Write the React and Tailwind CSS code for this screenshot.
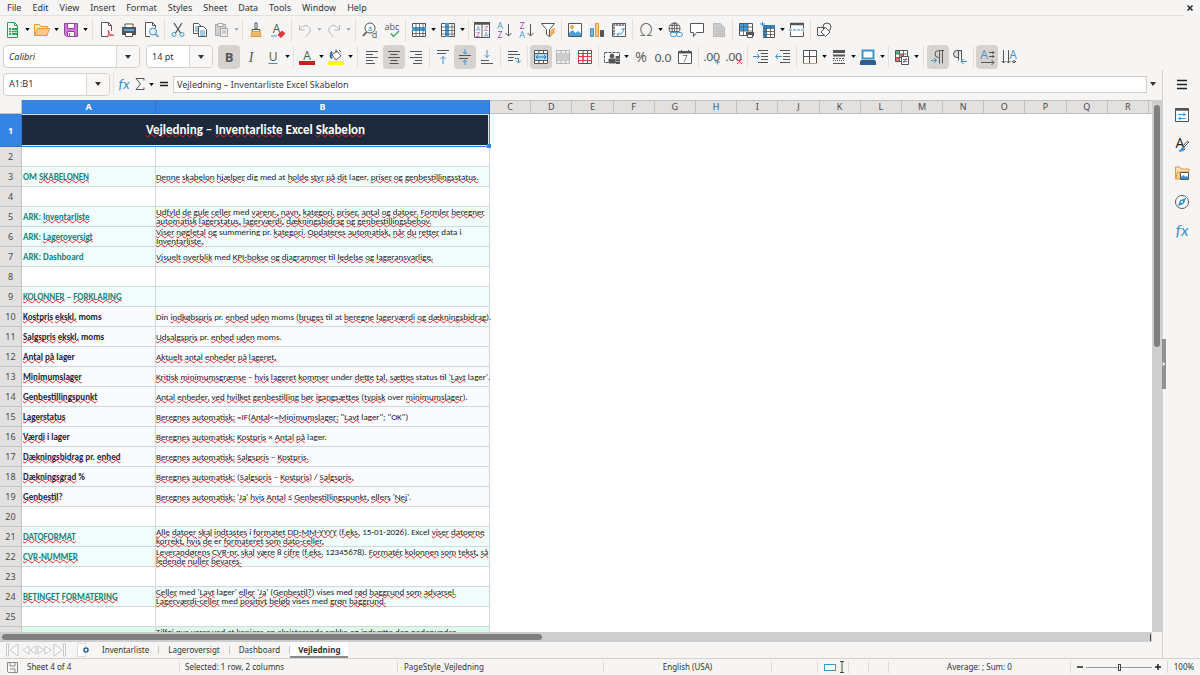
import React, { useState } from "react";

const UI = "font-['Noto_Sans',sans-serif]";
const CELL = "font-['Carlito','Lato',sans-serif]";

const G = "#555555";
const B = "#3d95cf";
const R = "#e0383e";
const O = "#e8963a";

const Svg = ({ children, className = "size-4" }) => (
  <svg
    viewBox="0 0 16 16"
    className={`overflow-visible ${className}`}
    fill="none"
    stroke={G}
    strokeWidth="1"
    aria-hidden="true"
  >
    {children}
  </svg>
);

const T = ({ x, y, size = 8, fill = G, children, ...rest }) => (
  <text
    x={x}
    y={y}
    fontSize={size}
    fill={fill}
    stroke="none"
    textAnchor="middle"
    fontFamily="Open Sans, sans-serif"
    {...rest}
  >
    {children}
  </text>
);

// Drawings for the two toolbars, keyed by command
const icons = {
  newDoc: (
    <>
      <path d="M2.5.5h7l3 3v12h-10z" fill="#fff" stroke="#2f9b57" />
      <path d="M9.5.5v3h3" stroke="#2f9b57" />
      <path d="M4 6h8v7H4z" fill="#3aa564" stroke="none" />
      <path d="M4 8.500h8M4 10.500h8M6.500 6v7" stroke="#fff" strokeWidth=".7" />
    </>
  ),
  open: (
    <>
      <path d="M.5 13.500V2.500h5l1.500 2h6.500v3" fill="#fce2b8" stroke={O} />
      <path d="M.5 13.500l3-7h12l-2.500 7z" fill="#fbc98a" stroke={O} />
    </>
  ),
  save: (
    <>
      <path d="M1.500 1.500h13v13h-11l-2-2z" fill="#c77fd0" stroke="#9a3fa8" />
      <path d="M4.500 1.500h7v5h-7zM4.500 9.500h7v5h-7z" fill="#fff" stroke="#9a3fa8" />
      <path d="M6.500 11v3.500" stroke="#9a3fa8" />
    </>
  ),
  pdf: (
    <>
      <path d="M9 14.500H2.500V.5h7l3 3V9" fill="#fff" />
      <path d="M9.500.5v3h3" />
      <path d="M8 15c1-2 2.500-4 1.800-6.500C9.500 8 8.800 9 10 11c1 1.500 3 2.500 4.500 2.500 1-.5-2-1.500-6.500 1.500z" stroke={R} />
    </>
  ),
  print: (
    <>
      <path d="M4 5V2h8v3" fill="#fff" />
      <path d="M1 5h14v8H1z" fill="#555" stroke="none" />
      <path d="M3 7h10v2H3z" fill="#55a7dc" stroke="none" />
      <path d="M4.500 10.500h7v4h-7z" fill="#fff" />
    </>
  ),
  preview: (
    <>
      <path d="M7 14.500H2.500V.5h7l3 3V6" fill="#fff" />
      <path d="M9.500.5v3h3" />
      <circle cx="10" cy="9.500" r="3.500" fill="#e3f1fa" stroke={B} />
      <path d="M12.500 12l3 3" stroke={B} strokeWidth="1.500" />
    </>
  ),
  cut: (
    <>
      <path d="M4 1l6.500 10M12 1L5.500 11" strokeWidth="1.300" />
      <circle cx="4" cy="12.500" r="2" stroke={B} />
      <circle cx="12" cy="12.500" r="2" stroke={B} />
    </>
  ),
  copy: (
    <>
      <path d="M1.500 1.500h5l3 3v7h-8z" fill="#fff" />
      <path d="M3 5h3M3 7h3M3 9h3" stroke={B} />
      <path d="M6.500 4.500h5l3 3v7h-8z" fill="#fff" />
      <path d="M8 9h5M8 11h5M8 13h5" stroke={B} />
    </>
  ),
  paste: (
    <g stroke="#a8a8a8">
      <path d="M1.500 2.500h10v11h-10z" fill="#cfcfcf" />
      <path d="M4 1.500h5v3H4z" fill="#f6f5f4" />
      <path d="M6.500 6.500h7v8h-7z" fill="#eee" />
      <path d="M8 9h4M8 11h4" />
    </g>
  ),
  clone: (
    <>
      <path d="M7 1h2v6H7z" fill="#fff" />
      <path d="M4 7.500h8v2H4z" fill="#fff" />
      <path d="M4 9.500h8l1 5H3z" fill="#f6ba6f" stroke={O} />
    </>
  ),
  clear: (
    <>
      <T x="6.500" y="11" size="12">A</T>
      <path d="M8 13l4-4 3 2.500-4 4z" fill={R} stroke={R} />
      <path d="M1 14h6" stroke={B} />
    </>
  ),
  undo: <path d="M2.500 3v5h5M2.500 8c2-4 6-5.500 9-3.500 3.500 3 1.500 7-3 10" stroke="#b5b5b5" />,
  redo: <path d="M13.500 3v5h-5M13.500 8c-2-4-6-5.500-9-3.500-3.500 3-1.500 7 3 10" stroke="#b5b5b5" />,
  find: (
    <>
      <circle cx="8" cy="6" r="5" fill="#fff" />
      <path d="M4.500 10L1 14" strokeWidth="1.700" />
      <T x="8" y="8.500" size="8" fill="#2a84c6">a</T>
      <T x="12.500" y="15.500" size="9">d</T>
    </>
  ),
  spell: (
    <>
      <T x="8" y="7.500" size="9">abc</T>
      <path d="M7 11.500l2.500 3L15 9" stroke="#35a868" strokeWidth="1.400" />
    </>
  ),
  rows: (
    <>
      <path d="M1.500 1.500h13v13h-13z" fill="#fff" />
      <path d="M1 5h14v4H1z" fill="#3f9ddb" stroke="none" />
      <path d="M1 11.500h14M5 1v14M8.500 1v14M12 1v14" strokeWidth=".8" />
    </>
  ),
  cols: (
    <>
      <path d="M1.500 1.500h13v13h-13z" fill="#fff" />
      <path d="M5 1h4v14H5z" fill="#3f9ddb" stroke="none" />
      <path d="M12 1v14M1 5h14M1 8.500h14M1 12h14" strokeWidth=".8" />
    </>
  ),
  sort: (
    <>
      <path d="M.5.5h15v15H.5zM8 2v13.500" fill="#fff" />
      <path d="M0 1.500h16" strokeWidth="2.500" />
      <T x="4" y="8.500" size="7" fill={B}>A</T>
      <T x="4" y="15" size="7" fill="#b13bbd">Z</T>
      <T x="12" y="8.500" size="7" fill="#b13bbd">Z</T>
      <T x="12" y="15" size="7" fill={B}>A</T>
    </>
  ),
  sortAsc: (
    <>
      <T x="4" y="7" size="9" fill={B}>A</T>
      <T x="4" y="15.500" size="9" fill="#b13bbd">Z</T>
      <path d="M12.500 2v12M9.500 11l3 3 3-3" />
    </>
  ),
  sortDesc: (
    <>
      <T x="4" y="7" size="9" fill="#b13bbd">Z</T>
      <T x="4" y="15.500" size="9" fill={B}>A</T>
      <path d="M12.500 2v12M9.500 11l3 3 3-3" />
    </>
  ),
  filter: (
    <>
      <path d="M1.500 1.500h13l-5 6v7l-3-2v-5z" fill="#fff" />
      <path d="M12 7h3l-2 3h2l-5 5 1.500-4H10z" fill="#f6ba6f" stroke={O} strokeWidth=".7" />
    </>
  ),
  image: (
    <>
      <path d="M1.500 1.500h13v13h-13z" fill="#fff" />
      <path d="M2 14v-3l3.500-3 3 3 2.500-2 3 2.500V14z" fill="#4aa0d8" stroke="none" />
      <circle cx="5" cy="5" r="1.500" fill="#f6ba6f" stroke={O} />
    </>
  ),
  chart: (
    <>
      <path d="M1.500 6.500h3v8h-3z" fill="#6db6e4" stroke={B} />
      <path d="M6.500 1.500h3v13h-3z" fill="#f9c98a" stroke={O} />
      <path d="M11.500 8.500h3v6h-3z" fill="#555" />
    </>
  ),
  pivot: (
    <>
      <path d="M1.500 1.500h13v13h-13z" fill="#fff" />
      <path d="M1.500 3h13M3 1.500v13" stroke="#8a8a8a" strokeWidth="2" strokeDasharray="2.500 .6" />
      <path d="M6 12.500c4.500 0 6.500-2 6.500-6M10.500 8l2-2 2 2M8 10.500l-2 2 2 2" stroke={B} />
    </>
  ),
  omega: <T x="8" y="14" size="17" fontFamily="Lato, sans-serif" fontWeight="300">Ω</T>,
  link: (
    <>
      <circle cx="7.500" cy="6.500" r="5.500" fill="#fff" />
      <path d="M2 6.500h11M7.500 1v11M3 3.500h9M3 9.500h9" strokeWidth=".8" />
      <ellipse cx="7.500" cy="6.500" rx="2.500" ry="5.500" />
      <rect x="3.500" y="10.500" width="6" height="4" rx="2" fill="#fff" stroke={B} />
      <rect x="9.500" y="10.500" width="6" height="4" rx="2" fill="#fff" stroke={B} />
    </>
  ),
  comment: <path d="M1.500 1.500h13v9h-7l-3 4v-4h-3z" fill="#fff" />,
  header: (
    <>
      <path d="M2.500 1.500h7l4 4v9h-11z" fill="#ccc" stroke="#bbb" />
      <path d="M4.500 6h7M4.500 9h7M4.500 12h7" stroke="#b8b8b8" />
    </>
  ),
  printArea: (
    <>
      <path d="M1.500 1.500h13v12h-13z" fill="#fff" />
      <path d="M2 2h8v7H2z" fill="#3f9ddb" stroke="none" />
      <path d="M1 5h14M1 9h14M5.500 1v13M10 1v13" strokeWidth=".8" />
      <path d="M8 10h8v4H8z" fill="#555" stroke="none" />
      <path d="M9.500 12.500h5v3h-5z" fill="#fff" />
    </>
  ),
  freeze: (
    <>
      <path d="M3.500 3.500h11v12h-11z" fill="#fff" />
      <path d="M3 3h12v3H6.500v9H3z" fill="#2f86c8" stroke="none" />
      <path d="M3 6.500h12M3 9.500h12M3 12.500h12M6.500 3v12M10.500 3v12" strokeWidth=".8" />
      <path d="M0 2h5M2.500 0v4" stroke={B} />
    </>
  ),
  split: (
    <>
      <path d="M1.500 1.500h13v13h-13z" fill="#fff" />
      <path d="M1 2h14" strokeWidth="2.500" />
      <path d="M0 8h16" stroke="#f6f5f4" strokeWidth="3" />
      <path d="M0 8h16" stroke={B} strokeDasharray="3 1" />
    </>
  ),
  shapes: (
    <>
      <path d="M1.500 5.500h7v8h-7z" />
      <circle cx="11" cy="5" r="4" />
      <path d="M9.500 5.500l4.500 4.500-4.500 4.500L5 10z" fill="#fff" />
    </>
  ),
  bold: <T x="8" y="12.500" size="13" fontWeight="bold">B</T>,
  italic: <T x="8" y="12.500" size="14" fontStyle="italic" fontFamily="Liberation Serif, serif">I</T>,
  underline: (
    <>
      <T x="8" y="11.500" size="12">U</T>
      <path d="M3.500 14.500h9" stroke={B} />
    </>
  ),
  fontColor: (
    <>
      <T x="8" y="10.500" size="12">A</T>
      <path d="M0 14h16" stroke="#c9211e" strokeWidth="4" />
    </>
  ),
  fill: (
    <>
      <path d="M4 6l5-4 4 5-5 4z" fill="#fff" />
      <path d="M8 4V.5M11 1l2 2" />
      <path d="M4 9.500C2.500 8 2.500 5 4 2.500" stroke="#2f6ea8" strokeWidth="2" />
      <path d="M0 14h16" stroke="#ffff00" strokeWidth="4" />
    </>
  ),
  left: <path d="M2 2.500h12M2 5.500h7M2 8.500h12M2 11.500h7M2 14.500h9" />,
  center: <path d="M2 2.500h12M4.500 5.500h7M2 8.500h12M4.500 11.500h7M3.500 14.500h9" />,
  right: <path d="M2 2.500h12M7 5.500h7M2 8.500h12M7 11.500h7M5 14.500h9" />,
  top: (
    <>
      <path d="M2 1.500h12M2 4.500h9" />
      <path d="M8 15V7.500M5.500 10L8 7.500l2.500 2.500" stroke={B} />
    </>
  ),
  middle: (
    <>
      <path d="M2 6.500h12M2 9.500h9" />
      <path d="M8 0v5M6 3l2 2 2-2M8 16v-5M6 13l2-2 2 2" stroke={B} />
    </>
  ),
  bottom: (
    <>
      <path d="M2 11.500h8M2 14.500h12" />
      <path d="M8 1v7.500M5.500 6L8 8.500 10.500 6" stroke={B} />
    </>
  ),
  wrap: (
    <>
      <path d="M2 2.500h10M2 5.500h12M2 8.500h6M2 11.500h5" />
      <path d="M9 9.500h3.500v4M10 11.500l2.500 2.500 2.500-2.500" stroke={B} />
    </>
  ),
  merge: (
    <>
      <path d="M1.500 1.500h13v13h-13zM1 4.500h14M1 11.500h14M6 1v3.500M10.500 1v3.500M6 11.500v3.500M10.500 11.500v3.500" fill="#fff" />
      <path d="M2 5h12v6H2z" fill="#b5dbf3" stroke="none" />
      <path d="M3 8h10M5 6L3 8l2 2M11 6l2 2-2 2" stroke="#1f7fc4" />
    </>
  ),
  mergeOff: (
    <>
      <path d="M1.500 1.500h13v13h-13zM1 5h14M1 11h14M6 1v4M10.500 1v4M6 11v4M10.500 11v4" stroke="#b5b5b5" fill="#eee" />
      <path d="M2 5.500h12v5H2z" fill="#ccc" stroke="none" />
    </>
  ),
  unmerge: (
    <>
      <path d="M1.500 1.500h13v13h-13zM6 1v14M10.500 1v14" fill="#fff" />
      <path d="M1 4.500h14M1 7.500h14M1 11.500h14M1.500 5v6M14.500 5v6M6 5v6M10.500 5v6" stroke={R} />
    </>
  ),
  currency: (
    <>
      <path d="M.5 3.500h15v10H.5z" fill="#fff" strokeDasharray="3 1" />
      <circle cx="8" cy="7" r="2" fill={G} />
      <path d="M5 10h6v4H5zM12 7.500h3.500v7H12z" fill={G} />
      <path d="M12 10h4M12 12.500h4" stroke="#ddd" strokeWidth=".6" />
    </>
  ),
  percent: <T x="8" y="13" size="14">%</T>,
  number: <T x="8" y="13" size="13" fontFamily="Carlito, Lato, sans-serif">0.0</T>,
  date: (
    <>
      <path d="M1.500 2.500h13v12h-13z" fill="#fff" />
      <path d="M1 3.500h14" strokeWidth="2" />
      <path d="M4.500 1v3M11.500 1v3" />
      <T x="8" y="13" size="9">7</T>
    </>
  ),
  addDec: (
    <>
      <T x="7.500" y="12" size="13" fontFamily="Carlito, Lato, sans-serif">.00</T>
      <path d="M13.500 10.500v5M11 13h5" stroke={B} />
    </>
  ),
  delDec: (
    <>
      <T x="7.500" y="12" size="13" fontFamily="Carlito, Lato, sans-serif">.00</T>
      <path d="M11 10l5 5M16 10l-5 5" stroke={R} />
    </>
  ),
  indent: (
    <>
      <path d="M5 1.500h10M8 4.500h7M8 7.500h7M8 10.500h7M5 13.500h10" />
      <path d="M0 7.500h6M4 5l2.500 2.500L4 10" stroke={B} />
    </>
  ),
  outdent: (
    <>
      <path d="M5 1.500h10M8 4.500h7M8 7.500h7M8 10.500h7M5 13.500h10" />
      <path d="M.5 7.500H7M3 5L.5 7.500 3 10" stroke={B} />
    </>
  ),
  border: (
    <>
      <path d="M1.500 14.500v-13h13v13M7.500 1.500v13M1.500 7.500h13" fill="#fff" />
      <path d="M1 14.500h14" stroke={O} />
    </>
  ),
  lineStyle: (
    <>
      <path d="M2 2.500h12" strokeWidth="3" />
      <path d="M2 6.500h12" strokeWidth="2" />
      <path d="M2 9.500h12" strokeDasharray="2 1" />
      <path d="M2 11.500h12" strokeDasharray="1 1" />
      <path d="M2 14.500h12" />
    </>
  ),
  lineColor: (
    <>
      <path d="M2.500 1.500h11v8h-11z" fill="#fff" stroke={B} strokeWidth="2" />
      <path d="M1 11.500h14" />
      <path d="M0 14h16" stroke="#2a6099" strokeWidth="4" />
    </>
  ),
  conditional: (
    <>
      <path d="M1.500 1.500h12v11h-12z" fill="#fff" />
      <path d="M2 2h4v3H2z" fill="#57b377" stroke="none" />
      <path d="M6 5h4v3H6zM2 8h4v4H2z" fill="#e8716f" stroke="none" />
      <path d="M1 5h13M1 8.500h8M5.500 1v12M9.500 1v6" strokeWidth=".8" />
      <path d="M7.500 7.500h7v8h-7z" fill="#fff" />
      <path d="M9 10.500h4M9 12.500h4M12.500 9l-3 5" strokeWidth=".8" />
    </>
  ),
  ltr: (
    <>
      <path d="M14 1.500H8.500a3.500 3.500 0 000 7H9.500M9.500 1.500v13M12.500 1.500v13" />
      <path d="M1 11.500h5.500M4 9l2.500 2.500L4 14" stroke={B} />
    </>
  ),
  rtl: (
    <>
      <path d="M10 1.500H5a3.500 3.500 0 000 7h1.500M6.500 1.500v10M9.500 1.500v10" fill="#ddd" />
      <path d="M9 12.500h6M11.500 10L9 12.500l2.500 2.500" stroke={B} />
    </>
  ),
  textH: (
    <>
      <T x="5" y="9.500" size="12" fill={B}>A</T>
      <path d="M10 3.500h5M13.500 2L15 3.500 13.500 5M10 7.500h5M13.500 6L15 7.500l-1.500 1.500M2 13.500h13M12.500 11l2.500 2.500-2.500 2.500" />
    </>
  ),
  textV: (
    <>
      <T x="12" y="9.500" size="12" fill={B}>A</T>
      <path d="M2.500 1v13M.5 12l2 2 2-2M7.500 1v13M5.500 12l2 2 2-2M13 11v3M11 12l2 2 2-2" />
    </>
  ),
};

const line1 = [
  "newDoc ▾", "open ▾", "save ▾", "||", "pdf", "print", "preview", "|", "cut", "copy", "paste ▿", "|",
  "clone", "clear", "|", "undo ▿", "redo ▿", "||", "find", "spell", "|", "rows ▾", "cols ▾", "|",
  "sort", "sortAsc", "sortDesc", "filter", "|", "image", "chart", "pivot", "|", "omega ▾", "link",
  "comment", "header", "|", "printArea", "freeze ▾", "split", "|", "shapes",
];

const line2 = [
  "bold *", "italic", "underline ▾", "|", "fontColor ▾", "fill ▾", "||", "left", "center *", "right", "|",
  "top", "middle *", "bottom", "|", "wrap", "|", "merge *", "mergeOff", "unmerge", "|", "currency ▾",
  "percent", "number", "date", "|", "addDec", "delDec", "|", "indent", "outdent", "|", "border ▾",
  "lineStyle ▾", "lineColor ▾", "|", "conditional ▾", "||", "ltr *", "rtl", "|", "textH *", "textV",
];

const Caret = ({ className = "h-[3px] w-[5px] text-black" }) => (
  <svg viewBox="0 0 6 4" className={className} aria-hidden="true">
    <path d="M0 0h6L3 4z" fill="currentColor" />
  </svg>
);

const Tools = ({ items }) =>
  items.map((item, i) => {
    if (item === "|" || item === "||") {
      return (
        <span key={i} className={`flex shrink-0 justify-center ${item === "|" ? "w-[5px]" : "w-[7px]"}`}>
          <span className="h-[22px] w-px bg-[#e4e2e0]" />
        </span>
      );
    }
    const [name, flag] = item.split(" ");
    return (
      <React.Fragment key={i}>
        <button
          aria-label={name}
          className={`flex h-6 w-[22px] shrink-0 items-center justify-center rounded ${
            flag === "*" ? "bg-[#d5d2cf]" : ""
          }`}
        >
          <Svg>{icons[name]}</Svg>
        </button>
        {(flag === "▾" || flag === "▿") && (
          <button aria-label={`${name} options`} className="flex h-6 w-[7px] shrink-0 items-center justify-center">
            <Caret className={flag === "▾" ? "h-[3px] w-[5px] text-black" : "h-[3px] w-[5px] text-[#b0b0b0]"} />
          </button>
        )}
      </React.Fragment>
    );
  });

const Combo = ({ label, value, className, inputClass = "" }) => (
  <div className={`flex h-[23px] shrink-0 overflow-hidden rounded border border-[#d3cfcb] bg-white ${className}`}>
    <input
      aria-label={label}
      defaultValue={value}
      className={`min-w-0 flex-1 bg-transparent px-[5px] text-[9px] text-[#2e3436] outline-none ${inputClass}`}
    />
    <button aria-label={`${label} list`} className="flex w-[23px] items-center justify-center border-l border-[#d9d6d3] bg-[#f8f7f6]">
      <Caret className="h-1 w-2 text-[#2e3436]" />
    </button>
  </div>
);

// Words between asterisks get the spell check squiggle
const Spelled = ({ text }) =>
  text.split("*").map((part, i) =>
    i % 2 ? (
      <span key={i} className="underline decoration-[#dc2626] decoration-wavy decoration-1 [text-decoration-skip-ink:none] [text-underline-offset:-1px]">
        {part}
      </span>
    ) : (
      part
    )
  );

const HEAD = "bg-[#f0fdfa] text-[#1b8378]";
const NOTE = "bg-[#f8fafc] text-[#1e293b]";

const rows = [
  { n: 2 },
  { n: 3, kind: HEAD, a: "OM *SKABELONEN*", b: ["*Denne* *skabelon* *hjælper* dig med at *holde* *styr* *på* *dit* lager, *priser* *og* *genbestillingsstatus.*"] },
  { n: 4 },
  { n: 5, kind: HEAD, a: "ARK: *Inventarliste*", b: ["*Udfyld* *de* *gule* *celler* med *varenr.,* *navn,* *kategori,* *priser,* *antal* *og* *datoer.* *Formler* *beregner*", "*automatisk* *lagerstatus,* *lagerværdi,* *dækningsbidrag* *og* *genbestillingsbehov.*"] },
  { n: 6, kind: HEAD, a: "ARK: *Lageroversigt*", b: ["*Viser* *nøgletal* *og* summering pr. *kategori.* *Opdateres* *automatisk,* *når* *du* *retter* data i", "*Inventarliste.*"] },
  { n: 7, kind: HEAD, a: "ARK: Dashboard", b: ["*Visuelt* *overblik* med *KPI-bokse* *og* *diagrammer* til *ledelse* *og* *lageransvarlige.*"] },
  { n: 8 },
  { n: 9, kind: HEAD, a: "*KOLONNER* – *FORKLARING*", b: [] },
  { n: 10, kind: NOTE, a: "*Kostpris* *ekskl.* moms", b: ["Din *indkøbspris* pr. *enhed* *uden* moms (*bruges* til at *beregne* *lagerværdi* *og* *dækningsbidrag*)."] },
  { n: 11, kind: NOTE, a: "*Salgspris* *ekskl.* moms", b: ["*Udsalgspris* pr. *enhed* *uden* moms."] },
  { n: 12, kind: NOTE, a: "*Antal* *på* lager", b: ["*Aktuelt* *antal* *enheder* *på* *lageret.*"] },
  { n: 13, kind: NOTE, a: "*Minimumslager*", b: ["*Kritisk* *minimumsgrænse* – *hvis* *lageret* *kommer* under *dette* *tal,* *sættes* status til '*Lavt* lager'."] },
  { n: 14, kind: NOTE, a: "*Genbestillingspunkt*", b: ["*Antal* *enheder,* *ved* *hvilket* *genbestilling* *bør* *igangsættes* (*typisk* over *minimumslager*)."] },
  { n: 15, kind: NOTE, a: "*Lagerstatus*", b: ["*Beregnes* *automatisk:* =IF(*Antal*<=*Minimumslager;* \"*Lavt* lager\"; \"OK\")"] },
  { n: 16, kind: NOTE, a: "*Værdi* i lager", b: ["*Beregnes* *automatisk:* *Kostpris* × *Antal* *på* lager."] },
  { n: 17, kind: NOTE, a: "*Dækningsbidrag* pr. *enhed*", b: ["*Beregnes* *automatisk:* *Salgspris* – *Kostpris.*"] },
  { n: 18, kind: NOTE, a: "*Dækningsgrad* %", b: ["*Beregnes* *automatisk:* (*Salgspris* – *Kostpris*) / *Salgspris.*"] },
  { n: 19, kind: NOTE, a: "*Genbestil*?", b: ["*Beregnes* *automatisk:* '*Ja*' *hvis* *Antal* ≤ *Genbestillingspunkt,* *ellers* '*Nej*'."] },
  { n: 20 },
  { n: 21, kind: HEAD, a: "*DATOFORMAT*", b: ["*Alle* *datoer* *skal* *indtastes* i *formatet* *DD-MM-YYYY* (*f.eks.* 15-01-2026). Excel *viser* *datoerne*", "*korrekt,* *hvis* *de* er *formateret* *som* *dato-celler.*"] },
  { n: 22, kind: HEAD, a: "*CVR-NUMMER*", b: ["*Leverandørens* *CVR-nr.* *skal* *være* 8 *cifre* (*f.eks.* 12345678). *Formatér* *kolonnen* *som* *tekst,* *så*", "*ledende* *nuller* *bevares.*"] },
  { n: 23 },
  { n: 24, kind: HEAD, a: "*BETINGET* *FORMATERING*", b: ["*Celler* med '*Lavt* lager' *eller* '*Ja*' (*Genbestil?*) vises med *rød* *baggrund* *som* *advarsel.*", "*Lagerværdi-celler* med *positivt* *beløb* vises med *grøn* *baggrund.*"] },
  { n: 25 },
  { n: 26, kind: "bg-[#dcfce7] text-[#166534]", b: ["*Tilføj* *nye* *varer* *ved* at *kopiere* *en* *eksisterende* *række* *og* *indsætte* *den* *nedenunder* –", "*formler* *og* *formatering* *følger* med."] },
];

const letters = "CDEFGHIJKLMNOPQR".split("");
const menus = ["File", "Edit", "View", "Insert", "Format", "Styles", "Sheet", "Data", "Tools", "Window", "Help"];

const Grid = () => (
  <table className="w-full table-fixed border-separate border-spacing-0">
    <colgroup>
      <col className="w-[22px]" />
      <col className="w-[134px]" />
      <col className="w-[334px]" />
      {letters.map((l) => (
        <col key={l} />
      ))}
      <col className="w-[3px]" />
    </colgroup>
    <thead className={`${UI} text-[9px] leading-[12px] text-[#4a4a4a]`}>
      <tr className="h-[14px]">
        <th className="border-r border-b border-[#c4c4c4] bg-[#f6f5f4] p-0" />
        <th className="border-r border-b border-[#2f74cf] bg-[#3584e4] p-0 font-bold text-white">A</th>
        <th className="border-r border-b border-[#2f74cf] bg-[#3584e4] p-0 font-bold text-white">B</th>
        {letters.map((l) => (
          <th key={l} className="border-t border-r border-b border-[#c0c0c0] bg-[#e2e1df] p-0 font-normal">
            {l}
          </th>
        ))}
        <th className="border-t border-b border-[#c0c0c0] bg-[#e2e1df] p-0" />
      </tr>
    </thead>
    <tbody className={`${CELL} text-[9px] leading-[9px]`}>
      <tr className="h-[33px]">
        <th className={`${UI} border-r border-b border-[#2f74cf] bg-[#3584e4] p-0 text-[9px] font-bold text-white`}>1</th>
        <td
          colSpan={2}
          className="relative border-r border-b border-[#3584e4] bg-[#1e293b] p-0 text-center text-[13px] leading-4 font-bold text-white shadow-[inset_-1px_-1px_#dbe7f6,inset_0_1px_#dbe7f6]"
        >
          <Spelled text="*Vejledning* – *Inventarliste* Excel *Skabelon*" />
          <span className="absolute -right-[2px] -bottom-[2px] size-1 bg-[#3584e4]" />
        </td>
        <td colSpan={17} className="bg-white p-0" />
      </tr>
      {rows.map((r) => (
        <tr key={r.n} className="h-5">
          <th className={`${UI} border-r border-b border-[#c4c4c4] bg-[#e2e1df] p-0 text-[9px] font-normal text-[#4a4a4a]`}>
            {r.n}
          </th>
          <td className={`border-r border-b border-[#cfd8dc] p-0 pl-px font-bold whitespace-nowrap ${r.kind || "bg-white"}`}>
            {r.a && <Spelled text={r.a} />}
          </td>
          <td className={`border-r border-b border-[#cfd8dc] p-0 whitespace-nowrap ${r.kind || "bg-white"}`}>
            <div className="pb-px text-[#1f2328]">
              {r.b?.map((line) => (
                <div key={line}>
                  <Spelled text={line} />
                </div>
              ))}
            </div>
          </td>
          <td colSpan={17} className="bg-white p-0" />
        </tr>
      ))}
    </tbody>
  </table>
);

const SideBar = () => (
  <aside className="flex w-[38px] shrink-0 flex-col items-center gap-[13px] border-l border-[#d3d0cd] pt-[6px]">
    <button aria-label="Sidebar settings" className="mb-[2px]">
      <Svg>
        <path d="M3 4.500h10M3 8.500h10M3 12.500h10" stroke="#222" strokeWidth="1.500" />
      </Svg>
    </button>
    <button aria-label="Properties">
      <Svg>
        <path d="M1.500 1.500h13v13h-13z" fill="#fff" />
        <path d="M1 2.500h14" strokeWidth="2.500" />
        <path d="M4 7.500h8M10 5.500v4M4 11.500h8M6 9.500v4" stroke={B} />
      </Svg>
    </button>
    <button aria-label="Styles">
      <Svg>
        <T x="6" y="11.500" size="14" fill="#222">A</T>
        <path d="M15 6l-5 5-1-1 4-4.500z" fill="#fff" />
        <path d="M5 15c2 0 2-3 4-4l2 2c-1 2-4 2.500-6 2z" fill={B} stroke={B} />
      </Svg>
    </button>
    <button aria-label="Gallery">
      <Svg>
        <path d="M1.500 14V2h4l1.500 2h8v3" fill="#fce2b8" stroke={O} />
        <path d="M1.500 14l2-7H14v7z" fill="#f9c98a" stroke={O} />
        <path d="M6.500 7.500h8v7h-8z" fill="#fff" />
        <path d="M7 14v-2l2.500-2 2 2 1-1 1.500 1v2z" fill={B} stroke="none" />
      </Svg>
    </button>
    <button aria-label="Navigator">
      <Svg>
        <circle cx="8" cy="8" r="6.500" fill="#fff" />
        <path d="M11.500 4.500l-2 5-5 2 2-5z" fill={B} stroke={B} />
        <circle cx="8" cy="8" r="1" fill="#fff" stroke="none" />
      </Svg>
    </button>
    <button aria-label="Functions">
      <Svg>
        <T x="8" y="13" size="17" fill={B} fontStyle="italic" fontFamily="Carlito, Lato, sans-serif">fx</T>
      </Svg>
    </button>
  </aside>
);

const Sep = () => <span className="h-3 w-px shrink-0 bg-[#dcdad8]" />;

const App = () => {
  const [sheet, setSheet] = useState("Vejledning");

  return (
    <div className={`${UI} flex h-screen flex-col overflow-hidden bg-[#f6f5f4] text-[9px] leading-3 text-[#2e3436]`}>
      {/* Menu bar */}
      <nav className="mr-4 flex h-4 shrink-0 items-center gap-[11px] border-b border-[#e4e2e0] pl-[7px]">
        {menus.map((m) => (
          <button key={m}>{m}</button>
        ))}
        <button aria-label="Close document" className="-mr-[9px] ml-auto">
          <svg viewBox="0 0 6 6" className="size-[6px]" stroke="#222" strokeWidth="1.500">
            <path d="M.5.5l5 5M5.500.5l-5 5" />
          </svg>
        </button>
      </nav>

      <div className="flex h-[27px] shrink-0 items-center pl-[2px]">
        <Tools items={line1} />
      </div>
      <div className="flex h-[27px] shrink-0 items-center pl-[3px]">
        <Combo label="Font name" value="Calibri" className="mr-[6px] w-[137px]" inputClass="italic" />
        <Combo label="Font size" value="14 pt" className="mr-[5px] w-[67px]" />
        <Tools items={line2} />
      </div>

      <div className="flex min-h-0 flex-1">
        <main className="flex min-w-0 flex-1 flex-col">
          {/* Formula bar */}
          <div className="flex h-[30px] shrink-0 items-center pb-[2px] pl-[3px]">
            <Combo label="Name box" value="A1:B1" className="w-[107px]" />
            <span className="ml-[3px] h-[22px] w-px bg-[#e4e2e0]" />
            <button aria-label="Function wizard" className="ml-[2px]">
              <Svg>
                <T x="8" y="12.500" size="15" fill={B} fontStyle="italic" fontFamily="Carlito, Lato, sans-serif">fx</T>
              </Svg>
            </button>
            <button aria-label="Select function" className="flex items-center">
              <Svg>
                <path d="M12 4.500v-2H4L8.500 8 4 13.500h8v-2" />
              </Svg>
              <span className="flex w-[7px] justify-center">
                <Caret />
              </span>
            </button>
            <button aria-label="Formula" className="mx-px">
              <Svg>
                <path d="M4 6.500h8M4 9.500h8" stroke="#222" strokeWidth="1.500" />
              </Svg>
            </button>
            <input
              aria-label="Input line"
              defaultValue="Vejledning – Inventarliste Excel Skabelon"
              className="h-[17px] min-w-0 flex-1 border border-[#d3cfcb] bg-white px-[3px] text-[9px] text-[#3a3a3a] outline-none"
            />
            <button aria-label="Expand formula bar" className="flex w-[15px] justify-center pr-[4px]">
              <Caret className="h-1 w-2 text-[#2e3436]" />
            </button>
          </div>

          {/* Sheet area */}
          <div className="flex min-h-0 flex-1">
            <div className="min-w-0 flex-1 overflow-hidden bg-white">
              <Grid />
            </div>
            <div className="w-[10px] shrink-0 bg-[#cecece] px-[2px] pt-[5px]">
              <div className="h-[46%] rounded-full bg-[#7f8080]" />
            </div>
          </div>
          <div className="mr-[10px] flex h-[10px] shrink-0 items-center justify-between bg-[#cecece] pr-px pl-[2px]">
            <div className="h-[6px] w-[47%] rounded-full bg-[#7f8080]" />
            <div className="h-[7px] w-px bg-[#444]" />
          </div>

          {/* Sheet tabs */}
          <div className="flex h-4 shrink-0 items-center text-[8px]">
            <svg viewBox="0 0 62 14" className="ml-[5px] h-[14px] w-[62px]" fill="#fff" stroke="#c9c7c5" aria-hidden="true">
              <path d="M1.500 1v12h2V1zM13 1L5 7l8 6zM24 3l-6 4 6 4zM31 3l-6 4 6 4zM33 3l6 4-6 4zM40 3l6 4-6 4zM49 1l8 6-8 6zM58.500 1v12h2V1z" />
            </svg>
            <button aria-label="Add sheet" className="ml-[5px] flex w-[21px] justify-center">
              <Svg>
                <path d="M2.500 1.500h8v13h-8z" fill="#fff" stroke="#ddd" />
                <circle cx="11" cy="8" r="2" fill="#fff" stroke="#2a6099" strokeWidth="1.500" />
              </Svg>
            </button>
            {["Inventarliste", "Lageroversigt", "Dashboard", "Vejledning"].map((name, i) => (
              <React.Fragment key={name}>
                {i > 0 && <span className="h-2 w-px bg-[#c9c7c5]" />}
                <button
                  onClick={() => setSheet(name)}
                  className={`h-4 ${
                    sheet === name ? "border-b-2 border-[#8b8b8b] bg-white px-2 pt-[2px] font-bold" : "px-[9px]"
                  }`}
                >
                  {name}
                </button>
              </React.Fragment>
            ))}
          </div>
        </main>
        <div className="flex w-0 items-center">
          <button aria-label="Hide sidebar" className="relative z-10 flex h-[50px] w-[4px] shrink-0 items-center bg-[#929292]">
            <svg viewBox="0 0 4 6" className="h-1 w-1" fill="#fff">
              <path d="M0 0l4 3-4 3z" />
            </svg>
          </button>
        </div>
        <SideBar />
      </div>

      {/* Status bar */}
      <footer className="flex h-[17px] shrink-0 items-center border-t border-[#d3d0cd] text-[8px]">
        <span className="flex w-[27px] pl-1">
          <Svg>
            <path d="M3.500 3.500h10v10h-9l-1-1zM6 3.500h5v3.500H6zM6 10h5v3.500" stroke="#8a8a8a" />
          </Svg>
        </span>
        <span className="w-[152px]">Sheet 4 of 4</span>
        <Sep />
        <span className="w-[217px] pl-[5px]">Selected: 1 row, 2 columns</span>
        <Sep />
        <span className="w-[205px] pl-[6px]">PageStyle_Vejledning</span>
        <Sep />
        <span className="w-[167px] text-center">English (USA)</span>
        <Sep />
        <span className="w-[45px]" />
        <Sep />
        <span className="flex w-[30px] items-center gap-[3px] pl-[6px]">
          <span className="h-[7px] w-3 border border-[#3d95cf] bg-white" />
          <svg viewBox="0 0 6 12" className="h-3 w-[6px]" fill="none" stroke="#222">
            <path d="M1 .5h4M3 .5v11M1 11.500h4" strokeWidth=".8" />
          </svg>
        </span>
        <Sep />
        <span className="w-[19px]" />
        <Sep />
        <span className="w-[19px]" />
        <Sep />
        <span className="flex-1 text-center">Average: ; Sum: 0</span>
        <Sep />
        <label className="flex w-[96px] items-center justify-center gap-[3px]">
          <svg viewBox="0 0 6 6" className="size-[6px]" stroke="#222" strokeWidth="1.500">
            <path d="M0 3h6" />
          </svg>
          <input
            type="range"
            aria-label="Zoom"
            min="20"
            max="180"
            defaultValue="100"
            className="h-2 w-[66px] appearance-none bg-[linear-gradient(#9a9a9a,#9a9a9a)] bg-[length:100%_1px] bg-center bg-no-repeat [&::-webkit-slider-thumb]:h-[7px] [&::-webkit-slider-thumb]:w-[3px] [&::-webkit-slider-thumb]:appearance-none [&::-webkit-slider-thumb]:border [&::-webkit-slider-thumb]:border-[#444] [&::-webkit-slider-thumb]:bg-white"
          />
          <svg viewBox="0 0 6 6" className="size-[6px]" stroke="#222" strokeWidth="1.500">
            <path d="M0 3h6M3 0v6" />
          </svg>
        </label>
        <Sep />
        <span className="w-[32px] text-center">100%</span>
      </footer>
    </div>
  );
};

export default App;
